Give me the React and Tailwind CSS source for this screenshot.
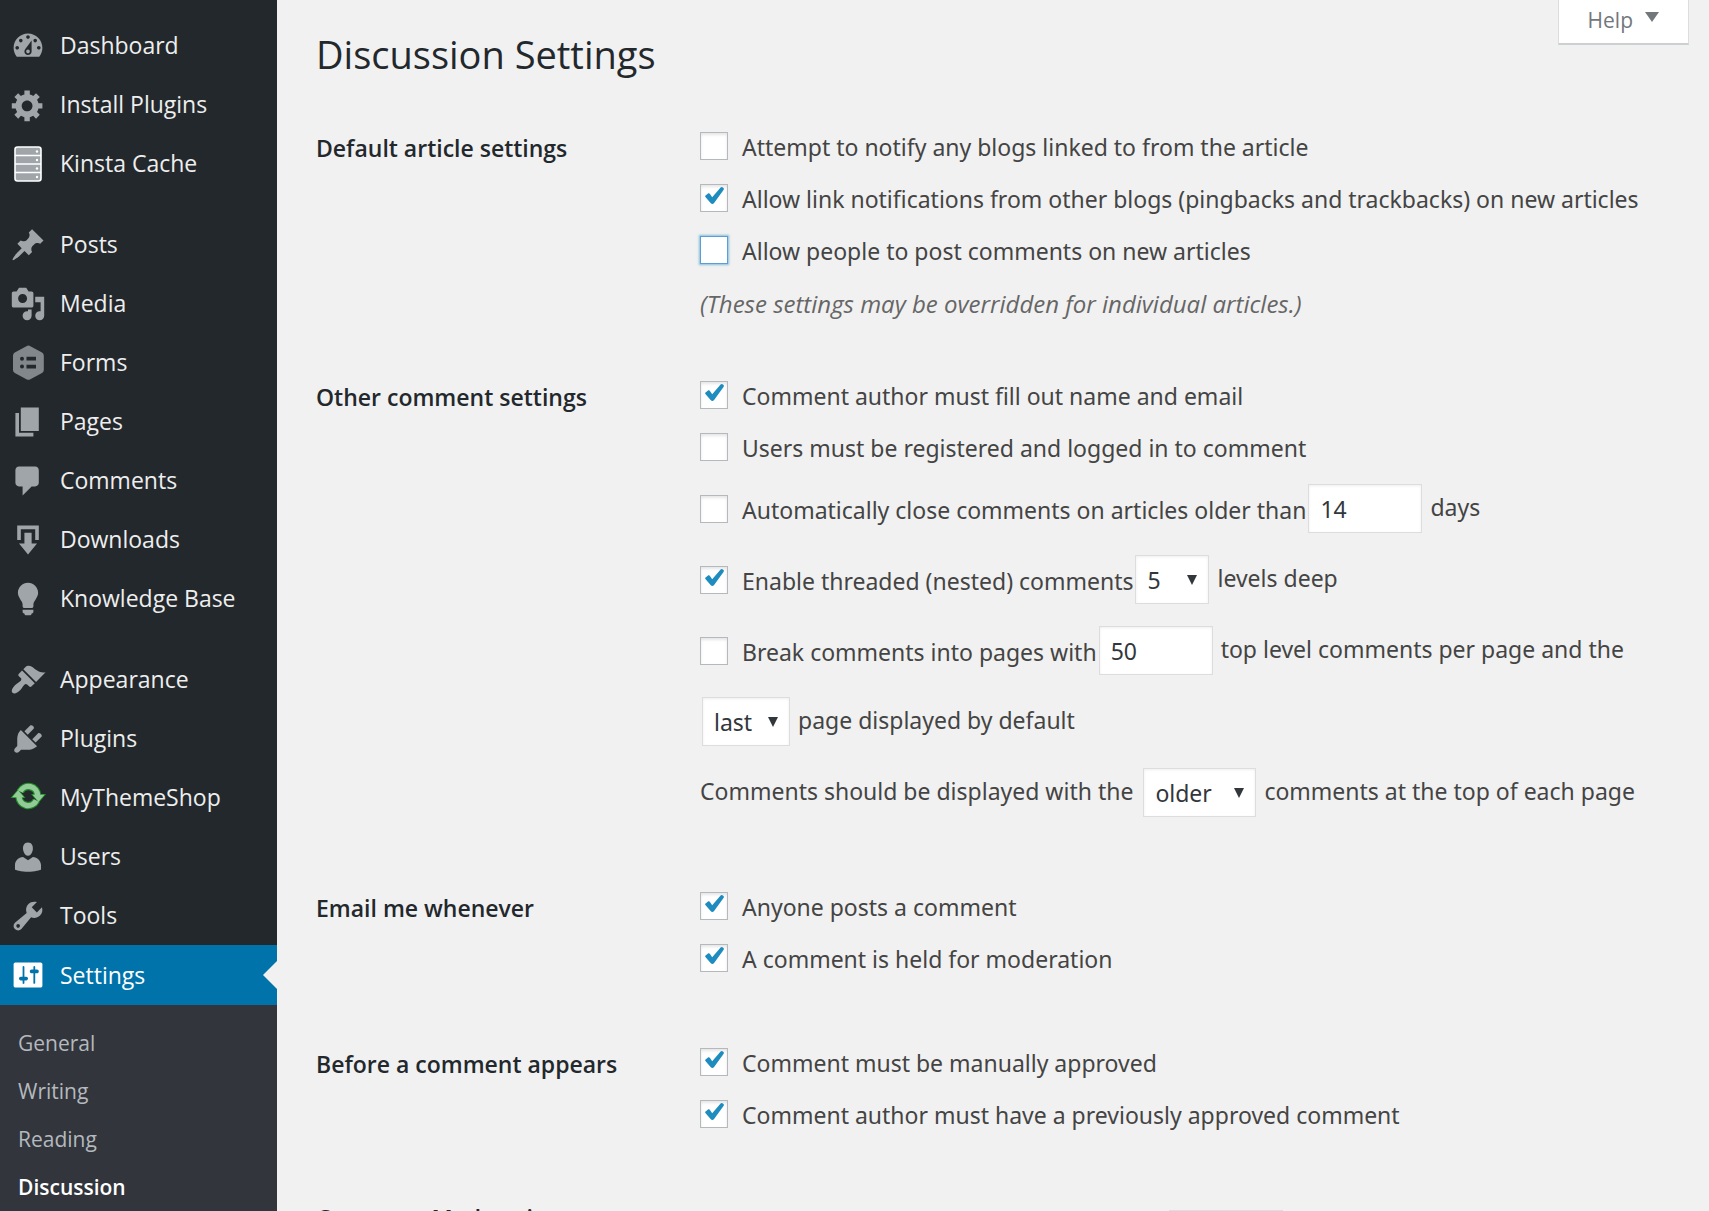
import React, { useId } from "react";

const paths = {
  dashboard:
    "M3.76 16h12.48c1.1-1.37 1.76-3.11 1.76-5 0-4.42-3.58-8-8-8s-8 3.58-8 8c0 1.89.66 3.63 1.76 5zM10 4c.55 0 1 .45 1 1s-.45 1-1 1-1-.45-1-1 .45-1 1-1zM6 6c.55 0 1 .45 1 1s-.45 1-1 1-1-.45-1-1 .45-1 1-1zm8 0c.55 0 1 .45 1 1s-.45 1-1 1-1-.45-1-1 .45-1 1-1zm-5.37 5.55L12 7v6c0 1.1-.9 2-2 2s-2-.9-2-2c0-.57.24-1.08.63-1.45zM4 10c.55 0 1 .45 1 1s-.45 1-1 1-1-.45-1-1 .45-1 1-1zm12 0c.55 0 1 .45 1 1s-.45 1-1 1-1-.45-1-1 .45-1 1-1zm-5 3c0-.55-.45-1-1-1s-1 .45-1 1 .45 1 1 1 1-.45 1-1z",
  generic:
    "M18 12h-2.18c-.17.7-.44 1.35-.81 1.93l1.54 1.54-2.1 2.1-1.54-1.54c-.58.36-1.23.63-1.91.79V19H8v-2.18c-.68-.16-1.33-.43-1.91-.79l-1.54 1.54-2.12-2.12 1.54-1.54c-.36-.58-.63-1.23-.79-1.91H1V9.03h2.17c.16-.7.44-1.35.8-1.94L2.43 5.55l2.1-2.1 1.54 1.54c.58-.37 1.24-.64 1.93-.81V2h3v2.18c.68.16 1.33.43 1.91.79l1.54-1.54 2.12 2.12-1.54 1.54c.36.59.64 1.24.8 1.94H18V12zm-8.5 1.5c1.66 0 3-1.34 3-3s-1.34-3-3-3-3 1.34-3 3 1.34 3 3 3z",
  post: "M10.44 3.02l1.82-1.82 6.36 6.35-1.83 1.82c-1.05-.68-2.48-.57-3.41.36l-.75.75c-.92.93-1.04 2.35-.35 3.41l-1.83 1.82-2.41-2.41-2.8 2.79c-.42.42-3.38 2.71-3.8 2.29s1.86-3.39 2.28-3.81l2.79-2.79L4.1 9.36l1.83-1.82c1.05.69 2.48.57 3.4-.36l.75-.75c.93-.92 1.05-2.35.36-3.41z",
  media:
    "M13 11V4c0-.55-.45-1-1-1h-1.67L9 1H5L3.67 3H2c-.55 0-1 .45-1 1v7c0 .55.45 1 1 1h10c.55 0 1-.45 1-1zM7 4.5c1.38 0 2.5 1.12 2.5 2.5S8.38 9.5 7 9.5 4.5 8.38 4.5 7 5.62 4.5 7 4.5zM14 6h5v10.5c0 1.38-1.12 2.5-2.5 2.5S14 17.88 14 16.5s1.12-2.5 2.5-2.5c.17 0 .34.02.5.05V9h-3V6zm-4 8.05V13h2v3.5c0 1.38-1.12 2.5-2.5 2.5S7 17.88 7 16.5 8.12 14 9.5 14c.17 0 .34.02.5.05z",
  page: "M6 15V2h10v13H6zm-1 1h8v2H3V5h2v11z",
  comments:
    "M5 2h9c1.1 0 2 .9 2 2v7c0 1.1-.9 2-2 2h-2l-5 5v-5H5c-1.1 0-2-.9-2-2V4c0-1.1.9-2 2-2z",
  download: "M14.01 4v6h2V2H4v8h2.01V4h8zm-2 2v6h3l-5 6-5-6h3V6h4z",
  bulb: "M10 1c3.11 0 5.63 2.52 5.63 5.62 0 1.84-2.03 4.58-2.03 4.58-.33.44-.6 1.25-.6 1.8v1c0 .55-.45 1-1 1H8c-.55 0-1-.45-1-1v-1c0-.55-.27-1.36-.6-1.8 0 0-2.02-2.74-2.02-4.58C4.38 3.52 6.89 1 10 1zM7 16.87V16h6v.87c0 .62-.13 1.13-.75 1.13H12c0 .62-.4 1-1.02 1h-2c-.61 0-.98-.38-.98-1h-.25c-.62 0-.75-.51-.75-1.13z",
  appearance:
    "M14.48 11.06L7.41 3.99l1.5-1.5c.5-.56 2.3-.47 3.51.32 1.21.8 1.43 1.28 2.91 2.1 1.18.64 2.45 1.26 4.45.85zm-.71.71L6.7 4.7 4.93 6.47c-.39.39-.39 1.02 0 1.41l1.06 1.06c.39.39.39 1.03 0 1.42-.6.6-1.43 1.11-2.21 1.69-.35.26-.7.53-1.01.84C1.43 14.23.4 16.08 1.4 17.07c.99 1 2.84-.03 4.18-1.36.31-.31.58-.66.85-1.02.57-.78 1.08-1.61 1.69-2.21.39-.39 1.02-.39 1.41 0l1.06 1.06c.39.39 1.02.39 1.41 0z",
  plugins:
    "M13.11 4.36L9.87 7.6 8 5.73l3.24-3.24c.35-.34 1.05-.2 1.56.32.52.51.66 1.21.31 1.55zm-8 1.77l.91-1.12 9.01 9.01-1.19.84c-.71.71-2.63 1.16-3.82 1.16H6.14L4.9 17.26c-.59.59-1.54.59-2.12 0-.59-.58-.59-1.53 0-2.12l1.24-1.24v-3.88c0-1.13.4-3.19 1.09-3.89zm7.26 3.97l3.24-3.24c.34-.35 1.04-.21 1.55.31.52.51.66 1.21.31 1.55l-3.24 3.25z",
  users:
    "M10 9.25c-2.27 0-2.73-3.44-2.73-3.44C7 4.02 7.82 2 9.97 2c2.16 0 2.98 2.02 2.71 3.81 0 0-.41 3.44-2.68 3.44zm0 2.57L12.72 10c2.39 0 4.52 2.33 4.52 4.53v2.49s-3.65 1.13-7.24 1.13c-3.65 0-7.24-1.13-7.24-1.13v-2.49c0-2.25 1.94-4.48 4.47-4.48z",
  tools:
    "M16.68 9.77c-1.34 1.34-3.3 1.67-4.95.99l-5.41 6.52c-.99.99-2.59.99-3.58 0s-.99-2.59 0-3.57l6.52-5.42c-.68-1.65-.35-3.61.99-4.95 1.28-1.28 3.12-1.62 4.72-1.06l-2.89 2.89 2.82 2.82 2.86-2.87c.53 1.58.18 3.39-1.08 4.65zM3.81 16.21c.4.39 1.04.39 1.43 0 .4-.4.4-1.04 0-1.43-.39-.4-1.03-.4-1.43 0-.39.39-.39 1.03 0 1.43z",
  settings:
    "M18 16V4c0-.55-.45-1-1-1H3c-.55 0-1 .45-1 1v12c0 .55.45 1 1 1h14c.55 0 1-.45 1-1zM8 11h1c.55 0 1 .45 1 1s-.45 1-1 1H8v1.5c0 .28-.22.5-.5.5s-.5-.22-.5-.5V13H6c-.55 0-1-.45-1-1s.45-1 1-1h1V5.5c0-.28.22-.5.5-.5s.5.22.5.5V11zm5-2h-1c-.55 0-1-.45-1-1s.45-1 1-1h1V5.5c0-.28.22-.5.5-.5s.5.22.5.5V7h1c.55 0 1 .45 1 1s-.45 1-1 1h-1v5.5c0 .28-.22.5-.5.5s-.5-.22-.5-.5V9z",
};

function KinstaIcon() {
  return (
    <svg viewBox="0 0 36 36" className="size-9 shrink-0" aria-hidden="true">
      <rect x="5" y="1" width="26" height="34" rx="2.5" fill="#a0a5aa" stroke="#fff" strokeWidth="1.6" />
      <path d="M5 9.5h26M5 18h26M5 26.5h26" stroke="#fff" strokeWidth="1.4" />
      {[5.5, 14, 22.5, 31].map((y) => (
        <circle key={y} cx="27" cy={y} r="1.2" fill="#fff" />
      ))}
    </svg>
  );
}

function FormsIcon() {
  return (
    <svg viewBox="0 0 36 36" className="size-9 shrink-0" aria-hidden="true">
      <path
        d="M16.4 1.2a4 4 0 0 1 4 0L32 7.6a3.6 3.6 0 0 1 1.8 3.1v14.2a3.6 3.6 0 0 1-1.8 3.1l-11.6 6.2a4 4 0 0 1-4 0L4.8 28A3.6 3.6 0 0 1 3 24.9V10.7a3.6 3.6 0 0 1 1.8-3.1z"
        fill="#82878c"
      />
      <circle cx="12" cy="13.7" r="2" fill="#23282d" />
      <circle cx="12" cy="21.6" r="2" fill="#23282d" />
      <path d="M16.5 11.8H26v3.8h-9.5zM16.5 19.7H26v3.8h-9.5z" fill="#23282d" />
    </svg>
  );
}

function RefreshIcon() {
  const arcs = "M10.2 11.5A9.2 9.2 0 0 1 27.6 15.5M26.4 20.5A9.2 9.2 0 0 1 9 16.5";
  const heads = "M22.5 14.8h12l-6 7zM14.1 17.2h-12l6-7z";
  return (
    <svg viewBox="0 0 36 36" className="size-9 shrink-0" aria-hidden="true">
      <path d={arcs} fill="none" stroke="#1f8a24" strokeWidth="7.6" />
      <path d={heads} fill="#1f8a24" stroke="#1f8a24" strokeWidth="1.4" />
      <path d={arcs} fill="none" stroke="#92cb98" strokeWidth="5.4" />
      <path d={heads} fill="#92cb98" />
    </svg>
  );
}

function Icon({ name, active }) {
  if (name === "kinsta") return <KinstaIcon />;
  if (name === "forms") return <FormsIcon />;
  if (name === "refresh") return <RefreshIcon />;
  return (
    <svg viewBox="0 0 20 20" className={active ? "size-9 shrink-0 fill-white" : "size-9 shrink-0 fill-[#a0a5aa]"} aria-hidden="true">
      <path d={paths[name]} fillRule={name === "dashboard" ? "evenodd" : "nonzero"} />
    </svg>
  );
}

const menu = [
  [
    ["Dashboard", "dashboard"],
    ["Install Plugins", "generic"],
    ["Kinsta Cache", "kinsta"],
  ],
  [
    ["Posts", "post"],
    ["Media", "media"],
    ["Forms", "forms"],
    ["Pages", "page"],
    ["Comments", "comments"],
    ["Downloads", "download"],
    ["Knowledge Base", "bulb"],
  ],
  [
    ["Appearance", "appearance"],
    ["Plugins", "plugins"],
    ["MyThemeShop", "refresh"],
    ["Users", "users"],
    ["Tools", "tools"],
    ["Settings", "settings"],
  ],
];

function Sidebar() {
  return (
    <nav className="w-[277px] shrink-0 bg-[#23282d] pt-4">
      <div className="flex flex-col gap-[22px]">
        {menu.map((group) => (
          <ul key={group[0][0]}>
            {group.map(([label, icon]) => {
              const active = label === "Settings";
              return (
                <li key={label}>
                  <a
                    href="#"
                    aria-current={active ? "true" : undefined}
                    className={
                      active
                        ? "relative flex h-[60px] items-center gap-3.5 bg-[#0073aa] pl-2.5 text-[23px] text-white"
                        : "flex h-[59px] items-center gap-3.5 pl-2.5 text-[23px] text-[#eee]"
                    }
                  >
                    <Icon name={icon} active={active} />
                    {label}
                    {active && (
                      <span className="absolute inset-y-0 right-0 my-auto h-7 w-3.5 bg-[#f1f1f1] [clip-path:polygon(100%_0,100%_100%,0_50%)]" />
                    )}
                  </a>
                </li>
              );
            })}
          </ul>
        ))}
      </div>
      <ul className="bg-[#32353c] py-3.5 text-[21px] text-[#b4b9be]">
        {["General", "Writing", "Reading", "Discussion"].map((label) => (
          <li key={label}>
            <a
              href="#"
              className={
                label === "Discussion"
                  ? "flex h-12 items-center pt-0.5 pl-[18px] font-semibold text-white"
                  : "flex h-12 items-center pt-0.5 pl-[18px]"
              }
            >
              {label}
            </a>
          </li>
        ))}
      </ul>
    </nav>
  );
}

function Check({ label, checked, focused }) {
  const id = useId();
  return (
    <div className="flex min-h-[52px] items-center">
      <span className="relative size-7 shrink-0">
        <input
          id={id}
          type="checkbox"
          defaultChecked={checked}
          className={
            focused
              ? "peer block size-7 appearance-none border border-[#5b9dd9] bg-white shadow-[0_0_2px_1px_rgba(30,140,190,0.5)]"
              : "peer block size-7 appearance-none border border-[#b4b9be] bg-white shadow-[inset_0_2px_3px_rgba(0,0,0,0.1)]"
          }
        />
        <svg viewBox="0 0 28 28" className="pointer-events-none absolute inset-0 hidden size-7 fill-[#1e8cbe] peer-checked:block" aria-hidden="true">
          <path d="M5.3 11.8 8.3 9.3q.9-.4 1.5.4l2.4 3.6L20.6 3.6q.9-.9 1.9-.3l1 .8q.8.7.2 1.7L14.1 18.9q-1.7 2.2-3.5.2L5.4 13q-.5-.7-.1-1.2z" />
        </svg>
      </span>
      <label htmlFor={id} className="pt-0.5 pl-3.5">
        {label}
      </label>
    </div>
  );
}

function NumberBox({ label, value }) {
  return (
    <input
      type="text"
      inputMode="numeric"
      aria-label={label}
      defaultValue={value}
      className="my-[11px] mr-2 ml-0.5 h-[49px] w-[114px] border border-[#ddd] bg-white px-[11px] text-[#32373c] shadow-[inset_0_1px_3px_rgba(0,0,0,0.07)]"
    />
  );
}

function Select({ label, value, options, width }) {
  return (
    <span className="relative my-[11px] mr-2 ml-0.5 block">
      <select
        aria-label={label}
        defaultValue={value}
        className={`${width} block h-[49px] appearance-none border border-[#ddd] bg-white pl-[11px] text-[#32373c] shadow-[inset_0_1px_3px_rgba(0,0,0,0.07)]`}
      >
        {options.map((o) => (
          <option key={o}>{o}</option>
        ))}
      </select>
      <svg viewBox="0 0 10 10" className="pointer-events-none absolute inset-y-0 right-3 my-auto size-2.5 fill-[#32373c]" aria-hidden="true">
        <path d="M0 0h10L5 10z" />
      </svg>
    </span>
  );
}

function Section({ title, children, className }) {
  return (
    <section className={`${className} grid grid-cols-[384px_1fr]`}>
      <h2 className="flex h-[52px] items-center pt-1 font-[Open_Sans,sans-serif] font-semibold text-[#23282d]">{title}</h2>
      <div>{children}</div>
    </section>
  );
}

const line = "flex flex-wrap items-center";

export default function App() {
  return (
    <div className="flex h-screen overflow-hidden bg-[#f1f1f1] font-[Open_Sans,sans-serif]">
      <Sidebar />
      <main className="min-w-0 flex-1 pr-5 pl-[39px]">
        <header className="flex items-start justify-between">
          <h1 className="mt-6 mb-9 text-[38px] leading-[60px] text-[#23282d]">Discussion Settings</h1>
          <button
            type="button"
            className="flex h-[45px] items-center gap-3 border border-t-0 border-b-2 border-[#ddd] border-b-[#ccd0d0] bg-white px-[29px] pb-0.5 text-[21px] text-[#72777c]"
          >
            Help
            <svg viewBox="0 0 14 10" className="mb-2 h-2.5 w-3.5 fill-[#72777c]" aria-hidden="true">
              <path d="M0 0h14L7 10z" />
            </svg>
          </button>
        </header>

        <form className="font-[Noto_Sans,sans-serif] text-[23px] leading-8 text-[#444]">
          <Section title="Default article settings" className="pb-10">
            <Check label="Attempt to notify any blogs linked to from the article" />
            <Check label="Allow link notifications from other blogs (pingbacks and trackbacks) on new articles" checked />
            <Check label="Allow people to post comments on new articles" focused />
            <p className="flex h-[53px] items-center pt-0.5 font-[Open_Sans,sans-serif] text-[24px] text-[#666] italic">
              (These settings may be overridden for individual articles.)
            </p>
          </Section>

          <Section title="Other comment settings" className="pb-[52px]">
            <Check label="Comment author must fill out name and email" checked />
            <Check label="Users must be registered and logged in to comment" />
            <div className={line}>
              <Check label="Automatically close comments on articles older than" />
              <NumberBox label="Days before comments close" value="14" />
              <span className="pb-1">days</span>
            </div>
            <div className={line}>
              <Check label="Enable threaded (nested) comments" checked />
              <Select label="Levels deep" value="5" options={["2", "3", "4", "5", "6", "7", "8", "9", "10"]} width="w-[74px]" />
              <span className="pb-1">levels deep</span>
            </div>
            <div className={line}>
              <Check label="Break comments into pages with" />
              <NumberBox label="Comments per page" value="50" />
              <span className="pb-1">top level comments per page and the</span>
              <Select label="Page displayed by default" value="last" options={["last", "first"]} width="w-[88px]" />
              <span className="pb-1">page displayed by default</span>
            </div>
            <div className={line}>
              <span className="pr-2 pb-1">Comments should be displayed with the</span>
              <Select label="Comment order" value="older" options={["older", "newer"]} width="w-[113px]" />
              <span className="pb-1">comments at the top of each page</span>
            </div>
          </Section>

          <Section title="Email me whenever" className="pb-[52px]">
            <Check label="Anyone posts a comment" checked />
            <Check label="A comment is held for moderation" checked />
          </Section>

          <Section title="Before a comment appears" className="pb-[50px]">
            <Check label="Comment must be manually approved" checked />
            <Check label="Comment author must have a previously approved comment" checked />
          </Section>

          <Section title="Comment Moderation" className="pb-[52px]">
            <div className="flex h-[88px] items-center">
              <span className="pr-2 pb-1">Hold a comment in the queue if it contains</span>
              <NumberBox label="Link limit" value="2" />
              <span className="pb-1">or more links.</span>
            </div>
          </Section>
        </form>
      </main>
    </div>
  );
}
